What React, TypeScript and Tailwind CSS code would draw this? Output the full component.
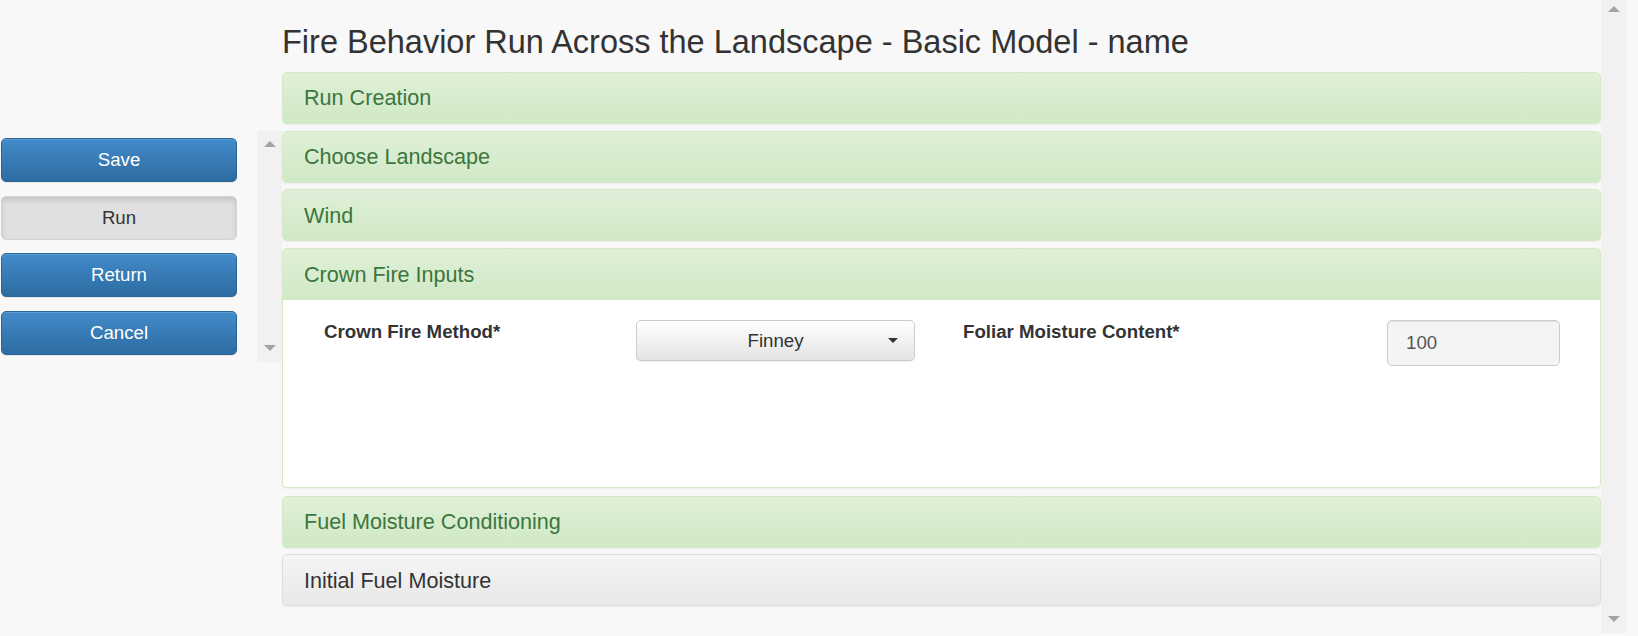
import React from "react";

const font = { fontFamily: '"Liberation Sans", Arial, sans-serif' };

const Arrow: React.FC<{ down?: boolean }> = ({ down }) => (
  <svg width="12" height="6" viewBox="0 0 12 6" className="block">
    {down ? <polygon points="0,0 12,0 6,6" fill="#a3a3a3" /> : <polygon points="6,0 12,6 0,6" fill="#a3a3a3" />}
  </svg>
);

const SideButton: React.FC<{ label: string; primary?: boolean }> = ({ label, primary }) =>
  primary ? (
    <button className="w-[236px] h-[44px] rounded-[5px] border border-[#2b669a] bg-gradient-to-b from-[#428bca] to-[#2d6ca2] text-white text-[18.67px] shadow-[inset_0_1px_0_rgba(255,255,255,0.15),0_1px_1px_rgba(0,0,0,0.075)]">
      {label}
    </button>
  ) : (
    <button className="w-[236px] h-[44px] rounded-[5px] border border-[#d4d4d4] bg-[#e0e0e0] text-[#333] text-[18.67px] shadow-[inset_0_3px_5px_rgba(0,0,0,0.125)]">
      {label}
    </button>
  );

const Heading: React.FC<{ title: string }> = ({ title }) => (
  <div className="h-[52px] shrink-0 flex items-center pl-[21px] pt-[1px] rounded-[5px] border border-[#d6e9c6] bg-gradient-to-b from-[#dff0d8] to-[#d0e9c6] text-[#3c763d] text-[21.6px] shadow-[0_1px_2px_rgba(0,0,0,0.05)]">
    {title}
  </div>
);

export default function App() {
  return (
    <div className="w-[1638px] h-[636px] flex overflow-hidden bg-[#f8f8f8] text-[#333]" style={font}>
      {/* left column */}
      <div className="w-[282px] shrink-0 pt-[131px]">
        <div className="flex h-[231px]">
          <div className="w-[257px] pt-[7px] pl-[1px] flex flex-col gap-[13.7px]">
            <SideButton label="Save" primary />
            <SideButton label="Run" />
            <SideButton label="Return" primary />
            <SideButton label="Cancel" primary />
          </div>
          <div className="w-[25px] bg-[#f1f1f1] flex flex-col items-center justify-between pt-[10px] pb-[11px]">
            <Arrow />
            <Arrow down />
          </div>
        </div>
      </div>

      {/* main column */}
      <div className="w-[1319px] shrink-0">
        <h3 className="pt-[25px] mb-[12px] text-[32.5px] leading-[35px] font-normal text-[#333]">
          Fire Behavior Run Across the Landscape - Basic Model - name
        </h3>
        <div className="flex flex-col gap-[6.7px]">
          <Heading title="Run Creation" />
          <Heading title="Choose Landscape" />
          <Heading title="Wind" />
          <div className="flex flex-col rounded-[5px] shadow-[0_1px_2px_rgba(0,0,0,0.05)]">
            <div className="h-[52px] flex items-center pl-[21px] pt-[1px] rounded-t-[5px] border border-b-0 border-[#d6e9c6] bg-gradient-to-b from-[#dff0d8] to-[#d0e9c6] text-[#3c763d] text-[21.6px]">
              Crown Fire Inputs
            </div>
            <div className="h-[188px] rounded-b-[5px] border border-t-0 border-[#d6e9c6] bg-white pt-[20px] pl-[41px] flex items-start">
              <label className="w-[312px] -mt-[1px] font-bold text-[18.67px] leading-[26.67px] text-[#333]">
                Crown Fire Method*
              </label>
              <div className="w-[279px] h-[41px] relative flex items-center justify-center rounded-[5px] border border-[#ccc] bg-gradient-to-b from-white to-[#e3e3e3] text-[18.67px] text-[#333] shadow-[inset_0_1px_0_rgba(255,255,255,0.15),0_1px_1px_rgba(0,0,0,0.075)]">
                Finney
                <span className="absolute right-[16px] top-[17px] w-0 h-0 border-l-[5px] border-r-[5px] border-t-[5px] border-l-transparent border-r-transparent border-t-[#333]" />
              </div>
              <label className="ml-[48px] w-[424px] -mt-[1px] font-bold text-[18.67px] leading-[26.67px] text-[#333]">
                Foliar Moisture Content*
              </label>
              <div className="w-[173px] h-[46px] flex items-center pl-[18px] rounded-[5px] border border-[#ccc] bg-[#f3f4f4] text-[18.67px] text-[#555] shadow-[inset_0_1px_1px_rgba(0,0,0,0.075)]">
                100
              </div>
            </div>
          </div>
          <div className="mt-[1px]">
            <Heading title="Fuel Moisture Conditioning" />
          </div>
          <div className="h-[52px] flex items-center pl-[21px] pt-[1px] rounded-[5px] border border-[#ddd] bg-gradient-to-b from-[#f5f5f5] to-[#e8e8e8] text-[#333] text-[21.6px] shadow-[0_1px_2px_rgba(0,0,0,0.05)]">
            Initial Fuel Moisture
          </div>
        </div>
      </div>

      {/* main scrollbar */}
      <div className="w-[25px] h-[633px] shrink-0 bg-[#f1f1f1] flex flex-col items-center justify-between pt-[6px] pb-[11px]">
        <Arrow />
        <Arrow down />
      </div>
      <div className="w-[12px] shrink-0" />
    </div>
  );
}
